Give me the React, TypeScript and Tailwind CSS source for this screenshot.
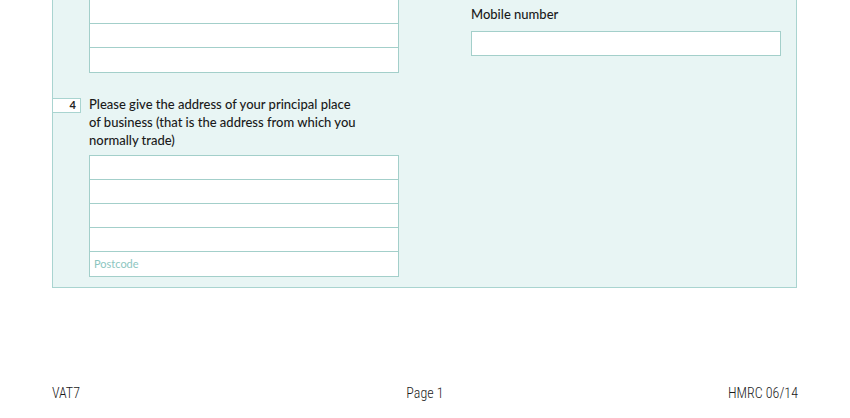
import React from "react";

const Field = ({ rows, placeholderLast }: { rows: number; placeholderLast?: string }) => (
  <div className="w-[310px] border border-[#a3cfca] bg-white">
    {Array.from({ length: rows }).map((_, i) => (
      <div
        key={i}
        className={`h-[24px] px-[4px] flex items-center text-[11px] text-[#8cc6bf] ${i < rows - 1 ? "border-b border-[#a3cfca]" : ""}`}
      >
        {placeholderLast && i === rows - 1 ? placeholderLast : ""}
      </div>
    ))}
  </div>
);

const App = () => {
  return (
    <div
      className="w-[850px] h-[418px] bg-white relative overflow-hidden"
      style={{ fontFamily: "Lato, 'Open Sans', sans-serif" }}
    >
      <div className="ml-[52px] w-[745px] h-[288px] bg-[#e8f5f4] border-x border-b border-[#a9d4d0] flex">
        {/* left column */}
        <div className="pl-[36px] w-[418px] flex flex-col">
          <div className="-mt-px">
            <Field rows={3} />
          </div>
          <div className="mt-[22px] flex">
            <div className="-ml-[37px] mt-[3px] w-[29px] h-[15px] bg-white border border-[#a9d4d0] flex items-center justify-end pr-[4px] text-[11px] font-bold text-[#222]">
              4
            </div>
            <p className="ml-[8px] w-[272px] text-[13px] leading-[18px] font-medium text-[#1a1a1a]">
              Please give the address of your principal place of business (that is the address from which you normally trade)
            </p>
          </div>
          <div className="mt-[6px]">
            <Field rows={5} placeholderLast="Postcode" />
          </div>
        </div>
        {/* right column */}
        <div className="pt-[5px] flex flex-col">
          <div className="text-[13px] leading-[18px] font-medium text-[#1a1a1a]">Mobile number</div>
          <div className="mt-[8px] w-[310px] h-[25px] bg-white border border-[#a3cfca]" />
        </div>
      </div>
      <div
        className="mx-[52px] mt-[95px] flex justify-between items-center text-[14px] font-light text-[#1a1a1a]"
        style={{ fontFamily: "'Roboto Condensed', 'Liberation Sans', sans-serif" }}
      >
        <span className="w-[120px]">VAT7</span>
        <span>Page 1</span>
        <span className="w-[120px] text-right">HMRC 06/14</span>
      </div>
    </div>
  );
};

export default App;
